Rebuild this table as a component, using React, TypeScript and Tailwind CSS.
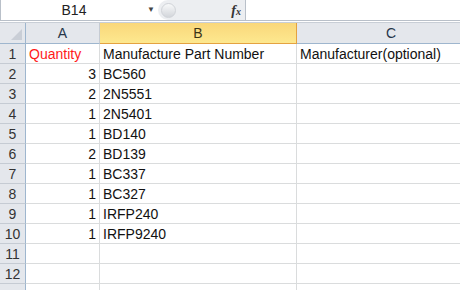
import React from "react";

const rows: [string, string][] = [
  ["3", "BC560"],
  ["2", "2N5551"],
  ["1", "2N5401"],
  ["1", "BD140"],
  ["2", "BD139"],
  ["1", "BC337"],
  ["1", "BC327"],
  ["1", "IRFP240"],
  ["1", "IRFP9240"],
];

const font = { fontFamily: '"Liberation Sans", Arial, sans-serif' };

function RowHead({ n }: { n?: number }) {
  return (
    <div className="w-[26px] shrink-0 h-full flex items-center justify-center pt-[2px] bg-[#e4e7ec] border-r border-b border-r-[#9eb6ce] border-b-[#c5cbd3] text-[14px] text-[#333]">
      {n}
    </div>
  );
}

function Cell({ w, children, className = "" }: { w: string; children?: React.ReactNode; className?: string }) {
  return (
    <div className={`${w} shrink-0 h-full flex items-center px-[3px] pt-[2px] border-r border-b border-[#dadcdd] text-[14px] text-[#111] whitespace-nowrap ${className}`}>
      {children}
    </div>
  );
}

export default function App() {
  return (
    <div className="w-[460px] h-[290px] overflow-hidden bg-white" style={font}>
      {/* formula bar */}
      <div className="flex h-[21px] border-b border-[#b9c0c9]">
        <div className="w-[158px] shrink-0 flex items-center border-l border-[#b9c0c9]">
          <span className="w-[146px] text-center text-[14px] text-[#222]">B14</span>
          <span className="text-[8px] text-[#444] leading-none">▼</span>
        </div>
        <div className="w-[88px] shrink-0 flex items-center bg-[#eceef1] rounded-l-full border-r border-[#b9c0c9]">
          <span className="ml-[3px] w-[15px] h-[15px] rounded-full bg-gradient-to-b from-[#f8f9fa] to-[#d3d6db] border border-[#d0d3d8]" />
          <span
            className="ml-auto mr-[4px] text-[14px] italic font-bold text-[#333]"
            style={{ fontFamily: '"Liberation Serif", serif' }}
          >
            f<span className="text-[10px]">x</span>
          </span>
        </div>
        <div className="flex-1" />
      </div>
      <div className="h-[2px] border-b border-[#c8ced6]" />

      {/* column headers */}
      <div className="flex h-[21px]">
        <div className="w-[26px] shrink-0 h-full bg-[#e4e7ec] border-r border-b border-[#9eb6ce] relative">
          <span className="absolute right-[3px] bottom-[3px] w-0 h-0 border-l-[11px] border-l-transparent border-b-[11px] border-b-[#c9ced6]" />
        </div>
        <div className="w-[74px] shrink-0 h-full flex items-center justify-center pt-[1px] bg-[#e4e7ec] border-r border-b border-r-[#c5cbd3] border-b-[#9eb6ce] text-[14px] text-[#27364a]">
          A
        </div>
        <div className="w-[197px] shrink-0 h-full flex items-center justify-center pt-[1px] bg-gradient-to-b from-[#f9d77a] to-[#fde88f] border-r border-b border-[#e4a241] text-[14px] text-[#3b3416]">
          B
        </div>
        <div className="w-[188px] shrink-0 h-full flex items-center justify-center pt-[1px] bg-[#e4e7ec] border-b border-[#9eb6ce] text-[14px] text-[#27364a]">
          C
        </div>
      </div>

      {/* data rows */}
      <div className="flex h-[20px]">
        <RowHead n={1} />
        <Cell w="w-[74px]" className="text-[#ff1a1a]">Quantity</Cell>
        <Cell w="w-[197px]">Manufacture Part Number</Cell>
        <Cell w="w-[188px]" className="border-r-0">Manufacturer(optional)</Cell>
      </div>
      {rows.map(([qty, part], i) => (
        <div key={part} className="flex h-[20px]">
          <RowHead n={i + 2} />
          <Cell w="w-[74px]" className="justify-end">{qty}</Cell>
          <Cell w="w-[197px]">{part}</Cell>
          <Cell w="w-[188px]" className="border-r-0" />
        </div>
      ))}
      {[11, 12].map((n) => (
        <div key={n} className="flex h-[20px]">
          <RowHead n={n} />
          <Cell w="w-[74px]" />
          <Cell w="w-[197px]" />
          <Cell w="w-[188px]" className="border-r-0" />
        </div>
      ))}
      {/* next row, only its top edge shows */}
      <div className="flex h-[20px]">
        <RowHead />
        <Cell w="w-[74px]" />
        <Cell w="w-[197px]" />
        <Cell w="w-[188px]" className="border-r-0" />
      </div>
    </div>
  );
}
